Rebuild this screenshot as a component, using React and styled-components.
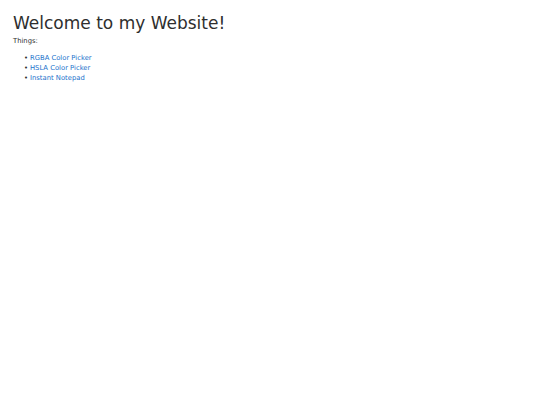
import React from "react";
import styled, { createGlobalStyle } from "styled-components";

const GlobalStyle = createGlobalStyle`
  html, body {
    margin: 0;
    padding: 0;
    background: #fff;
  }
  body {
    font-family: "DejaVu Sans", Verdana, sans-serif;
    font-size: 6.8px;
    line-height: 1.5;
    color: #2e2e2e;
  }
`;

const Page = styled.div`
  padding: 13px 13px;
`;

const Title = styled.h1`
  margin: 0 0 3px 0;
  font-size: 17px;
  font-weight: normal;
  line-height: 1.2;
`;

const Label = styled.p`
  margin: 0 0 6px 0;
`;

const List = styled.ul`
  margin: 0;
  padding-left: 17px;
  list-style: none;
`;

const Item = styled.li`
  &::before {
    content: "•";
    display: inline-block;
    width: 6px;
    margin-left: -6px;
    color: #2e2e2e;
  }
`;

const Link = styled.a`
  color: #1a72cc;
  text-decoration: none;

  &:visited {
    color: #1a72cc;
  }
`;

const things = [
  { name: "RGBA Color Picker", href: "#rgba" },
  { name: "HSLA Color Picker", href: "#hsla" },
  { name: "Instant Notepad", href: "#notepad" },
];

export default function App() {
  return (
    <>
      <GlobalStyle />
      <Page>
        <Title>Welcome to my Website!</Title>
        <Label>Things:</Label>
        <List>
          {things.map((t) => (
            <Item key={t.href}>
              <Link href={t.href}>{t.name}</Link>
            </Item>
          ))}
        </List>
      </Page>
    </>
  );
}
